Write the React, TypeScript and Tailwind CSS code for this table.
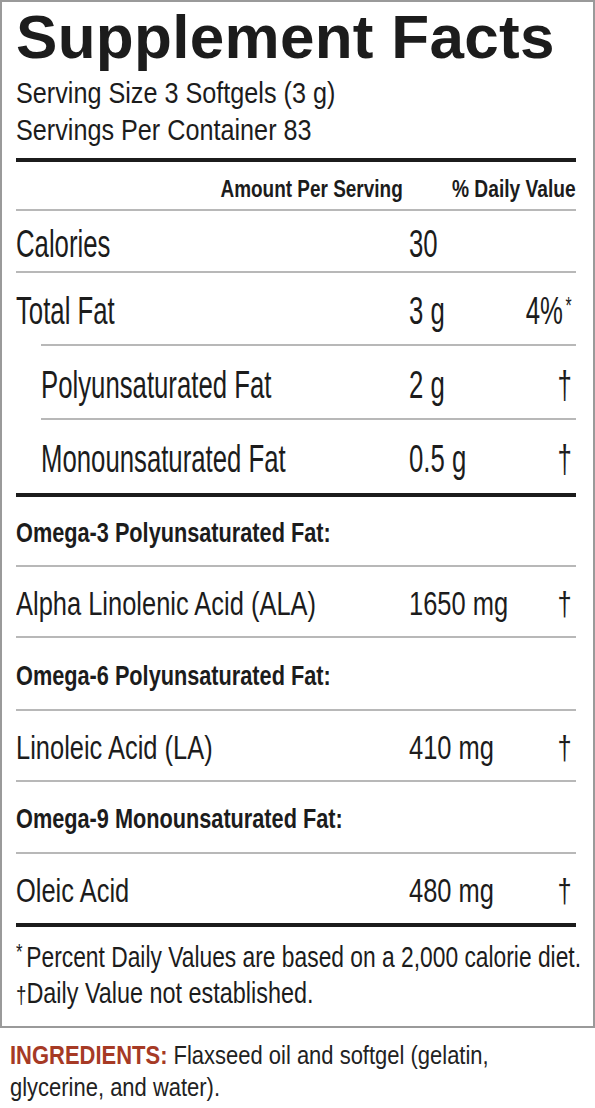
import React from "react";

type Row = {
  name: string;
  amount?: string;
  dv?: React.ReactNode;
  bold?: boolean;
  big?: boolean;
  indent?: boolean;
  h: number;
};

function N({
  children,
  right,
  sc,
}: {
  children: React.ReactNode;
  right?: boolean;
  sc: string;
}) {
  return (
    <span className={"inline-block whitespace-nowrap " + (right ? "origin-right " : "origin-left ") + sc}>
      {children}
    </span>
  );
}

function ThinRule({ indent }: { indent?: boolean }) {
  return <div className={indent ? "ml-[25px] h-[2px] bg-[#b8b8b8]" : "h-[2px] bg-[#b8b8b8]"} />;
}

function ThickRule() {
  return <div className="h-[4px] bg-[#1c1c1c]" />;
}

function NutrientRow({ r }: { r: Row }) {
  const textCls = r.big ? "text-[39px] leading-none" : "text-[33.5px] leading-none";
  const sc = r.big ? "scale-x-[0.66]" : "scale-x-[0.76]";
  return (
    <div className={(r.indent ? "ml-[25px] " : "") + "flex items-center pt-[4px]"} style={{ height: r.h }}>
      {r.bold ? (
        <div className="min-w-0 flex-1 text-[28px] font-bold leading-none">
          <N sc="scale-x-[0.775]">{r.name}</N>
        </div>
      ) : (
        <>
          <div className={"min-w-0 flex-1 " + textCls}>
            <N sc={sc}>{r.name}</N>
          </div>
          <div className={"w-[100px] shrink-0 " + textCls}>
            <N sc={sc}>{r.amount}</N>
          </div>
          <div className={"flex w-[67px] shrink-0 justify-end pr-[4px] " + textCls}>
            <N right sc={sc}>{r.dv}</N>
          </div>
        </>
      )}
    </div>
  );
}

export default function App() {
  return (
    <div className="w-[595px] h-[1108px] bg-white text-[#1c1c1c] font-['Liberation_Sans',Arial,sans-serif] overflow-hidden">
      <div className="h-[1028px] border-2 border-[#9a9a9a] pl-[14px] pr-[17px]">
        <h1 className="mt-[4px] h-[62px] text-[62px] leading-none font-bold tracking-[0.3px] whitespace-nowrap">
          Supplement Facts
        </h1>
        <div className="mt-[6px] text-[30px] leading-[37px]">
          <div>
            <N sc="scale-x-[0.84]">Serving Size 3 Softgels (3 g)</N>
          </div>
          <div>
            <N sc="scale-x-[0.84]">Servings Per Container 83</N>
          </div>
        </div>
        <div className="mt-[10px]">
          <ThickRule />
        </div>
        <div className="flex h-[47px] pt-[15px] text-[24px] font-bold leading-none">
          <div className="w-[387px] text-right">
            <N right sc="scale-x-[0.79]">Amount Per Serving</N>
          </div>
          <div className="flex-1 text-right">
            <N right sc="scale-x-[0.8]">% Daily Value</N>
          </div>
        </div>
        <ThinRule />
        <NutrientRow r={{ name: "Calories", amount: "30", big: true, h: 60 }} />
        <ThinRule />
        <NutrientRow
          r={{
            name: "Total Fat",
            amount: "3 g",
            big: true,
            dv: (
              <span>
                4%<span className="relative -top-[10px] ml-[4px] text-[24px]">*</span>
              </span>
            ),
            h: 71,
          }}
        />
        <ThinRule indent />
        <NutrientRow r={{ name: "Polyunsaturated Fat", amount: "2 g", dv: "†", big: true, indent: true, h: 72 }} />
        <ThinRule indent />
        <NutrientRow r={{ name: "Monounsaturated Fat", amount: "0.5 g", dv: "†", big: true, indent: true, h: 73 }} />
        <ThickRule />
        <NutrientRow r={{ name: "Omega-3 Polyunsaturated Fat:", bold: true, h: 68 }} />
        <ThinRule />
        <NutrientRow r={{ name: "Alpha Linolenic Acid (ALA)", amount: "1650 mg", dv: "†", h: 69 }} />
        <ThinRule />
        <NutrientRow r={{ name: "Omega-6 Polyunsaturated Fat:", bold: true, h: 71 }} />
        <ThinRule />
        <NutrientRow r={{ name: "Linoleic Acid (LA)", amount: "410 mg", dv: "†", h: 69 }} />
        <ThinRule />
        <NutrientRow r={{ name: "Omega-9 Monounsaturated Fat:", bold: true, h: 70 }} />
        <ThinRule />
        <NutrientRow r={{ name: "Oleic Acid", amount: "480 mg", dv: "†", h: 69 }} />
        <ThickRule />
        <div className="mt-[13px] text-[30px] leading-[33px]">
          <div>
            <N sc="scale-x-[0.76]">
              <span className="relative -top-[8px] mr-[5px] text-[22px]">*</span>Percent Daily Values are based on a
              2,000 calorie diet.
            </N>
          </div>
          <div>
            <N sc="scale-x-[0.78]">
              <span className="text-[24px]">†</span>Daily Value not established.
            </N>
          </div>
        </div>
      </div>
      <div className="mt-[11px] pl-[10px] text-[26px] leading-[32px] text-[#222]">
        <div>
          <N sc="scale-x-[0.845]">
            <span className="font-bold text-[#a63a25]">INGREDIENTS:</span> Flaxseed oil and softgel (gelatin,
          </N>
        </div>
        <div>
          <N sc="scale-x-[0.845]">glycerine, and water).</N>
        </div>
      </div>
    </div>
  );
}
